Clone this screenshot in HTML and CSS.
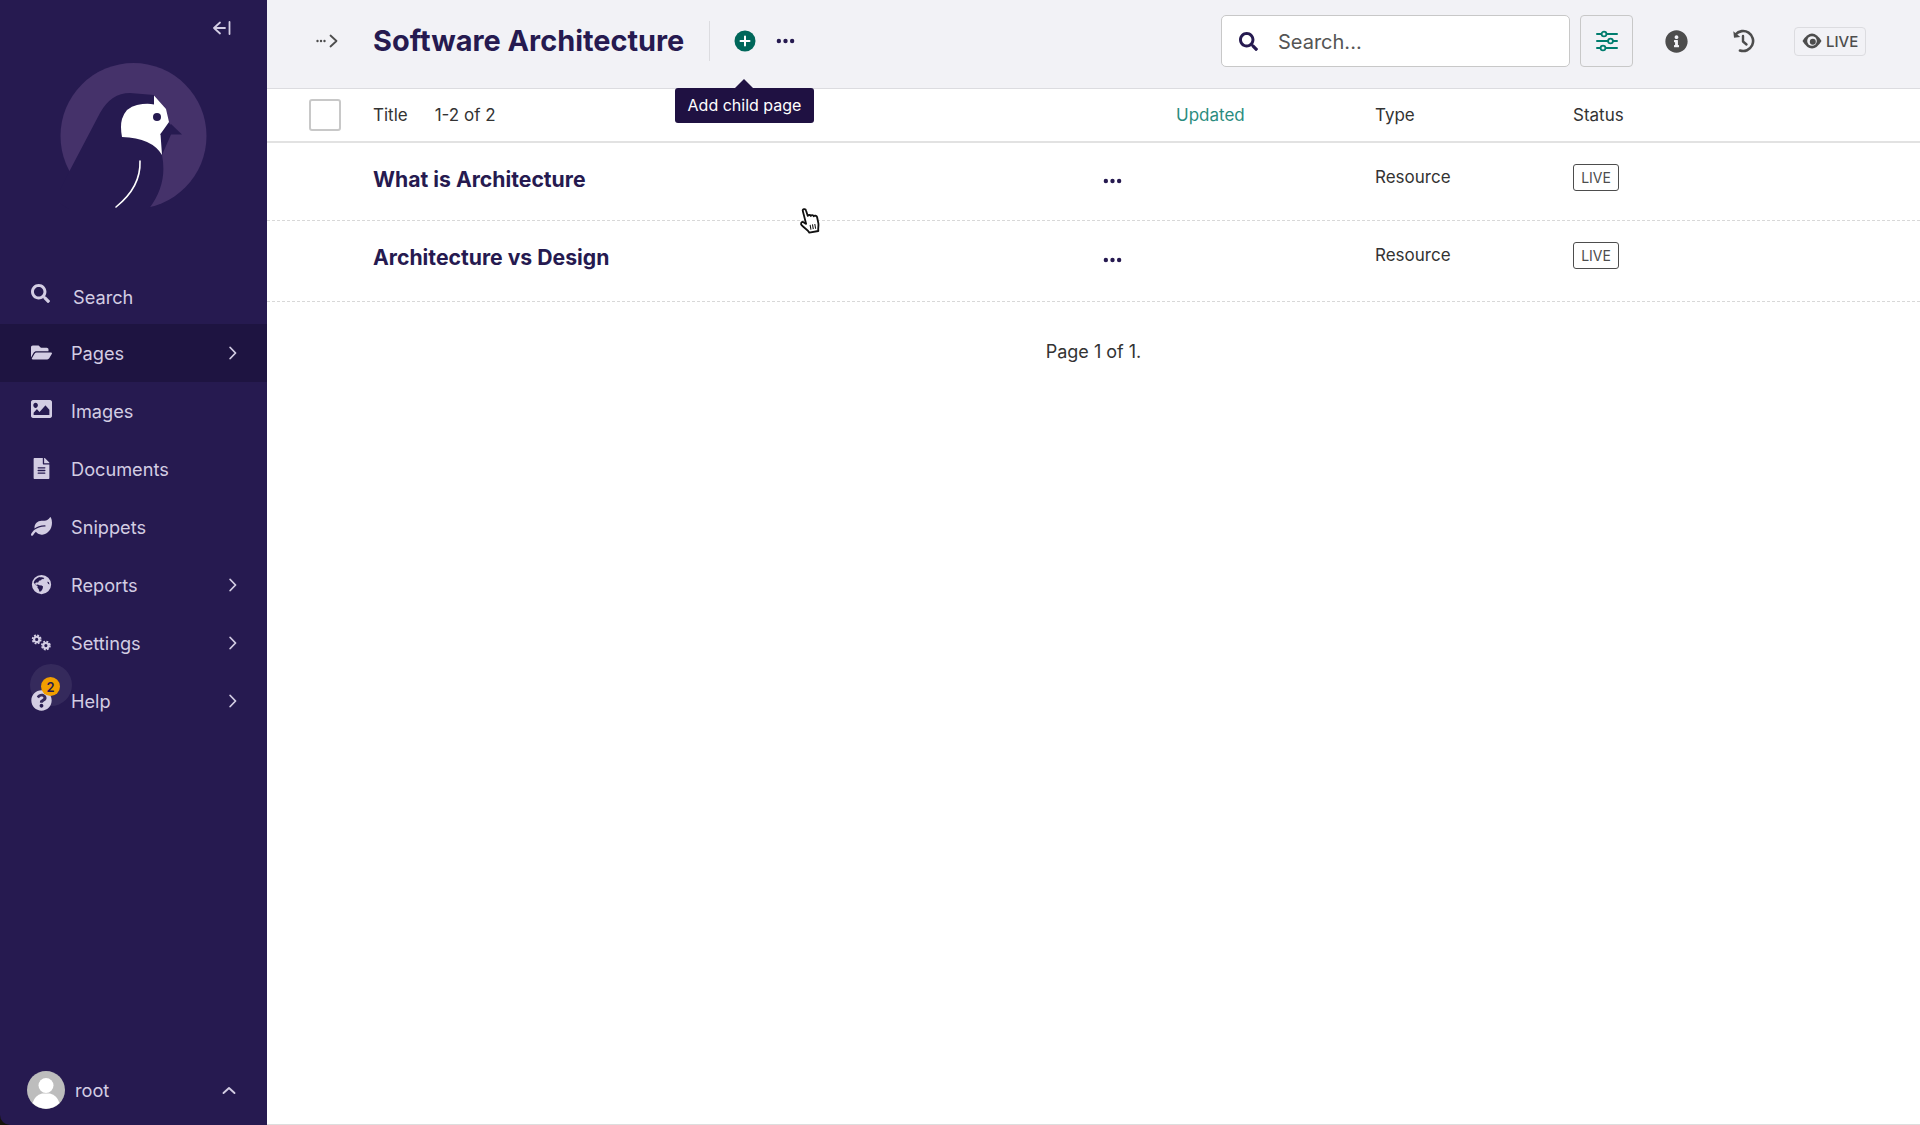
FILE: index.html
```html
<!DOCTYPE html>
<html lang="en">
<head>
<meta charset="utf-8">
<title>Software Architecture</title>
<link rel="stylesheet" href="styles.css">
</head>
<body>
<svg class="defs" width="0" height="0" aria-hidden="true">
  <symbol id="i-search" viewBox="0 0 512 512"><path d="M505 442.7L405.3 343c-4.5-4.5-10.6-7-17-7H372c27.6-35.3 44-79.7 44-128C416 93.1 322.9 0 208 0S0 93.1 0 208s93.1 208 208 208c48.3 0 92.7-16.4 128-44v16.3c0 6.4 2.5 12.5 7 17l99.7 99.7c9.4 9.4 24.6 9.4 33.9 0l28.3-28.3c9.4-9.4 9.4-24.6.1-34zM208 336c-70.7 0-128-57.2-128-128 0-70.7 57.2-128 128-128 70.7 0 128 57.2 128 128 0 70.7-57.2 128-128 128z"/></symbol>
  <symbol id="i-folder" viewBox="0 0 576 512"><path d="M572.694 292.093L500.27 416.248A63.997 63.997 0 0 1 444.989 448H45.025c-18.523 0-30.064-20.093-20.731-36.093l72.424-124.155A64 64 0 0 1 152 256h399.964c18.523 0 30.064 20.093 20.73 36.093zM152 224h328v-48c0-26.51-21.49-48-48-48H272l-64-64H48C21.49 64 0 85.49 0 112v278.046l69.077-118.418C86.214 242.25 117.989 224 152 224z"/></symbol>
  <symbol id="i-image" viewBox="0 64 512 384" preserveAspectRatio="none"><path d="M464 448H48c-26.51 0-48-21.49-48-48V112c0-26.51 21.49-48 48-48h416c26.51 0 48 21.49 48 48v288c0 26.51-21.49 48-48 48zM112 120c-30.928 0-56 25.072-56 56s25.072 56 56 56 56-25.072 56-56-25.072-56-56-56zM64 384h384V272l-87.515-87.515c-4.686-4.686-12.284-4.686-16.971 0L208 320l-55.515-55.515c-4.686-4.686-12.284-4.686-16.971 0L64 336v48z"/></symbol>
  <symbol id="i-file" viewBox="0 0 384 512"><path d="M224 136V0H24C10.7 0 0 10.7 0 24v464c0 13.3 10.7 24 24 24h336c13.3 0 24-10.7 24-24V160H248c-13.2 0-24-10.8-24-24zm64 236c0 6.6-5.4 12-12 12H108c-6.6 0-12-5.4-12-12v-8c0-6.6 5.4-12 12-12h168c6.6 0 12 5.4 12 12v8zm0-64c0 6.6-5.4 12-12 12H108c-6.6 0-12-5.4-12-12v-8c0-6.6 5.4-12 12-12h168c6.6 0 12 5.4 12 12v8zm0-72v8c0 6.6-5.4 12-12 12H108c-6.6 0-12-5.4-12-12v-8c0-6.6 5.4-12 12-12h168c6.6 0 12 5.4 12 12zm96-114.1v6.1H256V0h6.1c6.4 0 12.5 2.5 17 7l97.9 98c4.5 4.5 7 10.6 7 16.9z"/></symbol>
  <symbol id="i-leaf" viewBox="0 0 576 512"><path d="M546.2 9.7c-5.6-12.5-21.6-13-28.3-1.2C486.9 62.4 431.4 96 368 96h-80C182 96 96 182 96 288c0 7 .8 13.7 1.5 20.5C161.3 262.8 253.4 224 384 224c8.8 0 16 7.2 16 16s-7.2 16-16 16C132.6 256 26 410.1 2.4 468c-6.6 16.3 1.2 34.9 17.5 41.6 16.4 6.8 35-1.1 41.8-17.3 1.5-3.6 20.9-47.9 71.9-90.6 32.4 43.9 94 85.8 174.9 77.2C465.5 467.5 576 326.7 576 154.3c0-50.2-10.8-102.2-29.8-144.6z"/></symbol>
  <symbol id="i-globe" viewBox="0 0 24 24"><path fill-rule="evenodd" d="M12 1a11 11 0 1 0 0 22 11 11 0 0 0 0-22zM9.500 3.500c1 .4 2 .3 3 .1l2.800 1-1.300 1.400-1.500-.3-1 1.500-2.300.6-1 1.800-2.500.2-1.100 1.300 1 1.400 2.200-.6 1.800.9 2.600.2 1.600 1.200-.6 2.900-1.700 2.600-1.800.5-1-3-1.300-1.500.2-2-2.400-1.200-2.100-2.900C3.800 7 6.300 4.500 9.500 3.500zM18.500 8.800l1.700.2c.5 1 .8 2 .8 3l-1.500-1z"/></symbol>
  <symbol id="i-cogs" viewBox="0 0 24 20"><g fill="none" stroke="currentColor"><circle cx="6.500" cy="6.500" r="3" stroke-width="2.400"/><circle cx="6.500" cy="6.500" r="4.600" stroke-width="2" stroke-dasharray="2.200 1.413"/><circle cx="17" cy="13.500" r="3" stroke-width="2.400"/><circle cx="17" cy="13.500" r="4.600" stroke-width="2" stroke-dasharray="2.200 1.413"/></g></symbol>
  <symbol id="i-question" viewBox="0 0 512 512"><path d="M504 256c0 136.997-111.043 248-248 248S8 392.997 8 256C8 119.083 119.043 8 256 8s248 111.083 248 248zM262.655 90c-54.497 0-89.255 22.957-116.549 63.758-3.536 5.286-2.353 12.415 2.715 16.258l34.699 26.31c5.205 3.947 12.621 3.008 16.665-2.122 17.864-22.658 30.113-35.797 57.303-35.797 20.429 0 45.698 13.148 45.698 32.958 0 14.976-12.363 22.667-32.534 33.976C247.128 238.528 216 254.941 216 296v4c0 6.627 5.373 12 12 12h56c6.627 0 12-5.373 12-12v-1.333c0-28.462 83.186-29.647 83.186-106.667 0-58.002-60.165-102-116.531-102zM256 338c-25.365 0-46 20.635-46 46 0 25.364 20.635 46 46 46s46-20.636 46-46c0-25.365-20.635-46-46-46z"/></symbol>
  <symbol id="i-info" viewBox="0 0 512 512"><path d="M256 8C119.043 8 8 119.083 8 256c0 136.997 111.043 248 248 248s248-111.003 248-248C504 119.083 392.957 8 256 8zm0 110c23.196 0 42 18.804 42 42s-18.804 42-42 42-42-18.804-42-42 18.804-42 42-42zm56 254c0 6.627-5.373 12-12 12h-88c-6.627 0-12-5.373-12-12v-24c0-6.627 5.373-12 12-12h12v-64h-12c-6.627 0-12-5.373-12-12v-24c0-6.627 5.373-12 12-12h64c6.627 0 12 5.373 12 12v100h12c6.627 0 12 5.373 12 12v24z"/></symbol>
  <symbol id="i-chevron" viewBox="0 0 8 14"><path d="M1.200 1.500 6.500 7l-5.300 5.500" fill="none" stroke="currentColor" stroke-width="1.800" stroke-linecap="round" stroke-linejoin="round"/></symbol>
  <symbol id="i-dots" viewBox="0 0 20 6"><circle cx="3" cy="3" r="2.300"/><circle cx="10" cy="3" r="2.300"/><circle cx="17" cy="3" r="2.300"/></symbol>
</svg>

<div class="app">
  <aside class="sidebar">
    <div class="collapse-row">
      <svg class="collapse-icon" viewBox="0 0 19 14"><path d="M8 1.500 2 7l6 5.500M2 7h11M17.500 1v12" fill="none" stroke="currentColor" stroke-width="1.800" stroke-linecap="round" stroke-linejoin="round"/></svg>
    </div>
    <svg class="logo" viewBox="60 63 147 146">
      <circle class="logo-disc" cx="133.500" cy="136" r="73"/>
      <path class="logo-body" d="M69 172 100 113Q111 93 130 93L154 95 173 130 162 155Q168 185 148 210L100 230 55 200Z"/>
      <path class="logo-head" d="M154 95.500 166 109 169 122 160.500 134 162 155Q152 138 122 137Q120 126 122 119Q126 107 137 105Q147 103 154 104.500Z"/>
      <path class="logo-body" d="M171 124 182 134.500H160Z"/>
      <circle class="logo-body" cx="157" cy="117" r="4"/>
      <path class="logo-wing" d="M140 161Q141 187 116 207"/>
    </svg>
    <nav class="nav">
      <a class="nav-item nav-item--search"><svg class="nav-icon nav-icon--search"><use href="#i-search"/></svg><span>Search</span></a>
      <a class="nav-item nav-item--active"><svg class="nav-icon"><use href="#i-folder"/></svg><span class="nav-label">Pages</span><svg class="chev"><use href="#i-chevron"/></svg></a>
      <a class="nav-item"><svg class="nav-icon nav-icon--image"><use href="#i-image"/></svg><span class="nav-label">Images</span></a>
      <a class="nav-item"><svg class="nav-icon"><use href="#i-file"/></svg><span class="nav-label">Documents</span></a>
      <a class="nav-item"><svg class="nav-icon"><use href="#i-leaf"/></svg><span class="nav-label">Snippets</span></a>
      <a class="nav-item"><svg class="nav-icon"><use href="#i-globe"/></svg><span class="nav-label">Reports</span><svg class="chev"><use href="#i-chevron"/></svg></a>
      <a class="nav-item"><svg class="nav-icon"><use href="#i-cogs"/></svg><span class="nav-label">Settings</span><svg class="chev"><use href="#i-chevron"/></svg></a>
      <a class="nav-item nav-item--help"><span class="halo"></span><svg class="nav-icon"><use href="#i-question"/></svg><span class="badge">2</span><span class="nav-label">Help</span><svg class="chev"><use href="#i-chevron"/></svg></a>
    </nav>
    <div class="account">
      <svg class="avatar" viewBox="0 0 38 38"><circle cx="19" cy="19" r="19" fill="#bdbdbd"/><circle cx="19" cy="14.500" r="7.500" fill="#fff"/><path d="M5.500 32Q8 24 15 22.500h8Q30 24 32.500 32A19 19 0 0 1 5.500 32Z" fill="#fff"/></svg>
      <span class="account-name">root</span>
      <svg class="account-chev" viewBox="0 0 14 9"><path d="M1.500 7 7 2l5.500 5" fill="none" stroke="currentColor" stroke-width="1.900" stroke-linecap="round" stroke-linejoin="round"/></svg>
    </div>
  </aside>

  <main class="main">
    <header class="topbar">
      <svg class="crumb" viewBox="0 0 23 14"><circle cx="1.500" cy="7" r="1.200"/><circle cx="5" cy="7" r="1.200"/><circle cx="8.500" cy="7" r="1.200"/><path d="M14.500 1.500 20.500 7l-6 5.500" fill="none" stroke="#4d4d4d" stroke-width="1.800" stroke-linecap="round" stroke-linejoin="round"/></svg>
      <h1 class="page-title">Software Architecture</h1>
      <span class="divider"></span>
      <svg class="add-icon" viewBox="0 0 22 22"><circle cx="11" cy="11" r="10.500" fill="#00675a"/><path d="M11 6.500v9M6.500 11h9" stroke="#fff" stroke-width="2" stroke-linecap="round"/></svg>
      <svg class="dots dots--head"><use href="#i-dots"/></svg>
      <div class="searchbox">
        <svg class="searchbox-icon"><use href="#i-search"/></svg>
        <span class="searchbox-text">Search...</span>
      </div>
      <button class="filter-btn" aria-label="Filter">
        <svg class="filter-icon" viewBox="0 0 22 22"><g fill="none" stroke="#007d6e" stroke-width="2" stroke-linecap="round"><path d="M1 4h20M1 11h20M1 18h20"/></g><g fill="#f2f2f6" stroke="#007d6e" stroke-width="1.800"><circle cx="8" cy="4" r="2.400"/><circle cx="14.500" cy="11" r="2.400"/><circle cx="7" cy="18" r="2.400"/></g></svg>
      </button>
      <svg class="info-icon"><use href="#i-info"/></svg>
      <svg class="history-icon" viewBox="0 0 24 24"><path d="M4.500 5.500A10 10 0 1 1 9 21.500" fill="none" stroke="#4d4d4d" stroke-width="2.600" stroke-linecap="round"/><path d="M2.300 2.300 3 8.800 9.300 7.900Z" fill="#4d4d4d"/><path d="M12 7v5.500l3.500 3" fill="none" stroke="#4d4d4d" stroke-width="2.400" stroke-linecap="round" stroke-linejoin="round"/></svg>
      <div class="live-btn">
        <svg class="eye" viewBox="0 0 20 16"><path d="M.5 8Q5 .5 10 .5T19.500 8Q15 15.500 10 15.500T.5 8Z" fill="#4d4d4d"/><circle cx="10" cy="8" r="4.800" fill="#f2f2f6"/><circle cx="10.800" cy="8.800" r="3" fill="#4d4d4d"/></svg>
        <span>LIVE</span>
      </div>
    </header>

    <div class="tip">Add child page</div>

    <div class="tbl-head">
      <div class="cell-check"><span class="checkbox"></span></div>
      <div class="cell-title-head"><span>Title</span><span class="count">1-2 of 2</span></div>
      <div class="head-updated">Updated</div>
      <div>Type</div>
      <div>Status</div>
    </div>

    <div class="row">
      <div></div>
      <div class="row-title-cell"><a class="row-title">What is Architecture</a><svg class="dots"><use href="#i-dots"/></svg></div>
      <div></div>
      <div class="row-type">Resource</div>
      <div><span class="status">LIVE</span></div>
    </div>
    <div class="row row--last">
      <div></div>
      <div class="row-title-cell"><a class="row-title">Architecture vs Design</a><svg class="dots dots--low"><use href="#i-dots"/></svg></div>
      <div></div>
      <div class="row-type">Resource</div>
      <div><span class="status">LIVE</span></div>
    </div>

    <p class="pager">Page 1 of 1.</p>

    <svg class="cursor" viewBox="0 0 20 26"><path d="M5 2.500C5 .8 8 .8 8 2.500L8.800 8C9.500 7 11.300 7.300 11.600 8.500 12.300 7.500 14 8 14.200 9.300 15 8.500 17 9.100 17.100 10.500L17.300 16.500C17.300 19 16 20.500 16 23.500L7.500 23.500C7 21 4.500 19.500 2 16 .5 14 1.800 12 3.800 13L6 15Z" fill="#fff" stroke="#111" stroke-width="1.700" stroke-linejoin="round"/><path d="M9.500 16.500v4.500M11.700 16.500v4.500M13.900 16.500v4.500" stroke="#111" stroke-width="1"/></svg>
  </main>
</div>
</body>
</html>
```
FILE: styles.css
```css
* { box-sizing: border-box; }
html, body { margin: 0; height: 100%; background: #15150c; }
body { font-family: Inter, "Liberation Sans", sans-serif; overflow: hidden; color: #333; }
.defs { position: absolute; }
.app { display: flex; height: 1125px; }

/* Sidebar */
.sidebar { width: 267px; flex: none; background: #261a50; display: flex; flex-direction: column; color: #d3cde3; border-bottom-left-radius: 10px; }
.collapse-row { height: 63px; display: flex; justify-content: flex-end; padding: 21px 36px 0 0; }
.collapse-icon { width: 19px; height: 14px; color: #d3cde3; }
.logo { width: 147px; height: 146px; margin-left: 60px; flex: none; }
.logo-disc { fill: #45326a; }
.logo-body { fill: #261a50; }
.logo-head { fill: #fff; }
.logo-wing { fill: none; stroke: #fff; stroke-width: 1.600; stroke-linecap: round; }
.nav { margin-top: 57px; display: flex; flex-direction: column; }
.nav-item { position: relative; height: 58px; display: flex; align-items: center; padding-left: 31px; font-size: 18.200px; }
.nav-item--active { background: #1e1441; }
.nav-item--search span { margin-left: 23px; padding-top: 4px; }
.nav-icon { width: 21px; height: 21px; fill: currentColor; color: #d3cde3; flex: none; margin-top: -2px; }
.nav-icon--search { width: 19px; height: 19px; margin-top: -4px; }
.nav-icon--image { height: 18px; margin-top: -4px; }
.nav-label { margin-left: 19px; flex: 1; }
.chev { width: 8px; height: 14px; margin-right: 30px; flex: none; }
.halo { position: absolute; left: 30px; top: -8px; width: 42px; height: 42px; border-radius: 50%; background: rgba(255, 255, 255, .07); }
.badge { position: absolute; left: 41px; top: 5px; width: 19px; height: 19px; border-radius: 50%; background: #f19e00; color: #261a50; font-size: 13px; font-weight: 600; display: flex; align-items: center; justify-content: center; }
.account { margin-top: auto; height: 70px; display: flex; align-items: center; padding: 0 31px 0 27px; }
.avatar { width: 38px; height: 38px; flex: none; }
.account-name { margin-left: 10px; font-size: 18.200px; flex: 1; }
.account-chev { width: 14px; height: 9px; }

/* Main */
.main { position: relative; flex: 1; background: #fff; border-bottom: 1px solid #ddd; }
.topbar { height: 89px; background: #f2f2f6; border-bottom: 1px solid #dcdce0; display: flex; align-items: center; padding: 0 0 6px 49px; }
.crumb { width: 23px; height: 14px; fill: #4d4d4d; flex: none; }
.page-title { margin: 0 0 0 34px; font-size: 28.900px; line-height: 1; font-weight: 700; color: #261a50; width: 336px; white-space: nowrap; }
.divider { width: 1px; height: 40px; background: #dcdce0; }
.add-icon { width: 22px; height: 22px; margin-left: 24px; flex: none; }
.dots { width: 19px; height: 6px; fill: #261a50; flex: none; }
.dots--head { margin-left: 20px; }
.searchbox { margin-left: auto; width: 349px; height: 52px; background: #fff; border: 1px solid #c8c8c8; border-radius: 5px; display: flex; align-items: center; padding-left: 17px; }
.searchbox-icon { width: 19px; height: 19px; fill: #261a50; flex: none; }
.searchbox-text { margin-left: 20px; padding-top: 2px; font-size: 20px; color: #555; }
.filter-btn { margin-left: 10px; width: 53px; height: 52px; background: #f2f2f6; border: 1px solid #c8c8c8; border-radius: 4px; padding: 0; display: flex; align-items: center; justify-content: center; }
.filter-icon { width: 22px; height: 22px; }
.info-icon { width: 23px; height: 23px; fill: #4d4d4d; margin-left: 32px; flex: none; }
.history-icon { width: 24px; height: 24px; margin-left: 43px; flex: none; }
.live-btn { margin: 0 54px 0 39px; width: 72px; height: 29px; border: 1px solid #dcdce0; border-radius: 4px; display: flex; align-items: center; padding-left: 7px; font-size: 15px; font-weight: 500; color: #4d4d4d; gap: 4px; }
.eye { width: 20px; height: 16px; flex: none; }

.tip { position: absolute; left: 408px; top: 88px; width: 139px; height: 35px; padding-bottom: 2px; background: #1f1142; color: #fff; font-size: 16px; border-radius: 3px; display: flex; align-items: center; justify-content: center; }
.tip::before { content: ""; position: absolute; left: 60px; top: -9px; border: solid transparent; border-width: 0 9px 9px; border-bottom-color: #1f1142; }

/* Table */
.tbl-head, .row { display: grid; grid-template-columns: 106px 804px 198px 198px 1fr; }
.tbl-head { height: 54px; border-bottom: 2px solid #e2e2e2; align-items: center; font-size: 17px; color: #333; }
.cell-check { padding-left: 42px; display: flex; }
.checkbox { width: 32px; height: 32px; background: #fff; border: 2px solid #c8c8c8; border-radius: 3px; }
.cell-title-head { display: flex; gap: 27px; }
.head-updated { color: #2b8c7e; margin-left: -1px; }
.row { height: 78px; border-bottom: 1px dashed #d8d8d8; font-size: 17px; }
.row--last { height: 81px; }
.row-title-cell { display: flex; justify-content: space-between; padding: 21px 55px 0 0; align-items: flex-start; }
.row-title { font-size: 21.200px; line-height: 30px; font-weight: 700; color: #261a50; white-space: nowrap; }
.row-title-cell .dots { margin-top: 14px; }
.row-title-cell .dots--low { margin-top: 15px; }
.row-type { padding-top: 22px; line-height: 24px; }
.status { display: inline-flex; align-items: center; justify-content: center; width: 46px; height: 27px; margin-top: 21px; border: 1px solid #4d4d4d; border-radius: 3px; font-size: 14px; color: #4d4d4d; }
.pager { margin: 38px 0 0; text-align: center; font-size: 18px; line-height: 24px; color: #333; }
.cursor { position: absolute; left: 531px; top: 207px; width: 24px; height: 28px; transform: rotate(-10deg); }
```
